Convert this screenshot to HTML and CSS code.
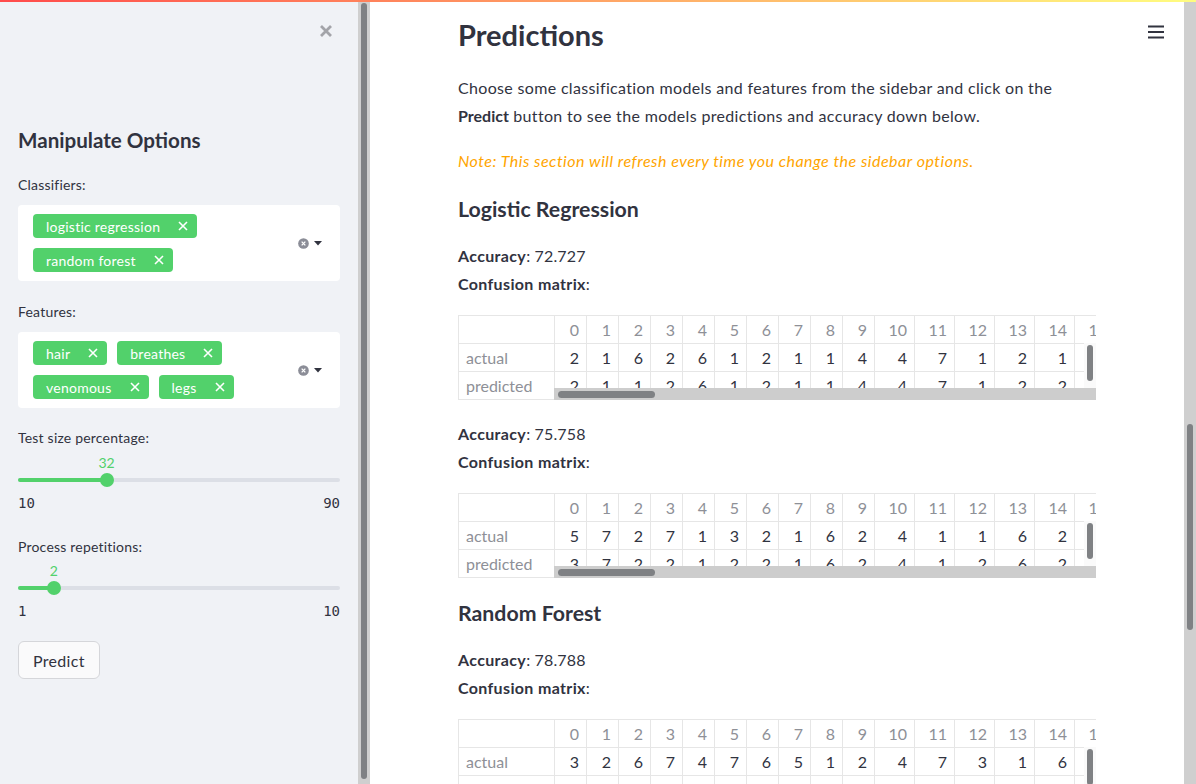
FILE: index.html
```html
<!DOCTYPE html>
<html lang="en">
<head>
<meta charset="utf-8">
<title>Predictions</title>
<link rel="stylesheet" href="styles.css">
</head>
<body>
<div class="decoration"></div>
<div class="app">
  <aside class="sidebar">
    <div class="sidebar-content">
      <div class="close-row">
        <svg class="close-icon" width="14" height="14" viewBox="0 0 14 14"><path d="M2 2L12 12M12 2L2 12" stroke="#a3a4a9" stroke-width="2.8" fill="none"/></svg>
      </div>
      <h2 class="side-title">Manipulate Options</h2>

      <div class="label first-label">Classifiers:</div>
      <div class="multiselect">
        <div class="tags">
          <span class="tag">logistic regression<svg class="tag-x" width="10" height="10" viewBox="0 0 10 10"><path d="M1 1L9 9M9 1L1 9" stroke="#fff" stroke-width="1.6"/></svg></span>
          <span class="tag">random forest<svg class="tag-x" width="10" height="10" viewBox="0 0 10 10"><path d="M1 1L9 9M9 1L1 9" stroke="#fff" stroke-width="1.6"/></svg></span>
        </div>
        <div class="ms-icons">
          <svg width="11" height="11" viewBox="0 0 12 12"><circle cx="6" cy="6" r="5.8" fill="#8b8d97"/><path d="M4 4L8 8M8 4L4 8" stroke="#fff" stroke-width="1.4"/></svg>
          <svg width="8" height="5" viewBox="0 0 8 5"><path d="M0 0H8L4 4.5Z" fill="#31333f"/></svg>
        </div>
      </div>

      <div class="label">Features:</div>
      <div class="multiselect">
        <div class="tags">
          <span class="tag">hair<svg class="tag-x" width="10" height="10" viewBox="0 0 10 10"><path d="M1 1L9 9M9 1L1 9" stroke="#fff" stroke-width="1.6"/></svg></span>
          <span class="tag">breathes<svg class="tag-x" width="10" height="10" viewBox="0 0 10 10"><path d="M1 1L9 9M9 1L1 9" stroke="#fff" stroke-width="1.6"/></svg></span>
          <span class="tag">venomous<svg class="tag-x" width="10" height="10" viewBox="0 0 10 10"><path d="M1 1L9 9M9 1L1 9" stroke="#fff" stroke-width="1.6"/></svg></span>
          <span class="tag">legs<svg class="tag-x" width="10" height="10" viewBox="0 0 10 10"><path d="M1 1L9 9M9 1L1 9" stroke="#fff" stroke-width="1.6"/></svg></span>
        </div>
        <div class="ms-icons">
          <svg width="11" height="11" viewBox="0 0 12 12"><circle cx="6" cy="6" r="5.8" fill="#8b8d97"/><path d="M4 4L8 8M8 4L4 8" stroke="#fff" stroke-width="1.4"/></svg>
          <svg width="8" height="5" viewBox="0 0 8 5"><path d="M0 0H8L4 4.5Z" fill="#31333f"/></svg>
        </div>
      </div>

      <div class="label slider-label">Test size percentage:</div>
      <div class="slider">
        <div class="slider-value-row"><span class="slider-value" style="left:27.5%">32</span></div>
        <div class="slider-track-area">
          <div class="slider-track"><div class="slider-fill" style="width:27.5%"></div></div>
          <div class="slider-thumb" style="left:27.5%"></div>
        </div>
        <div class="slider-minmax"><span>10</span><span>90</span></div>
      </div>

      <div class="label slider-label2">Process repetitions:</div>
      <div class="slider slider2">
        <div class="slider-value-row"><span class="slider-value" style="left:11.11%">2</span></div>
        <div class="slider-track-area">
          <div class="slider-track"><div class="slider-fill" style="width:11.11%"></div></div>
          <div class="slider-thumb" style="left:11.11%"></div>
        </div>
        <div class="slider-minmax"><span>1</span><span>10</span></div>
      </div>

      <button class="btn">Predict</button>
    </div>
    <div class="vscroll side-scroll"><div class="thumb"></div></div>
  </aside>

  <main class="main">
    <div class="main-area">
      <svg class="menu-icon" width="16" height="14" viewBox="0 0 16 14"><path d="M0 1.5H16M0 7H16M0 12.5H16" stroke="#31333f" stroke-width="2"/></svg>
      <div class="main-content">
        <h1 class="title">Predictions</h1>
        <p class="intro">Choose some classification models and features from the sidebar and click on the <strong>Predict</strong> button to see the models predictions and accuracy down below.</p>
        <p class="note">Note: This section will refresh every time you change the sidebar options.</p>

        <h3 class="model-title">Logistic Regression</h3>
        <div class="metric">
          <div><strong>Accuracy</strong>: 72.727</div>
          <div><strong>Confusion matrix</strong>:</div>
        </div>
        <div class="df">
          <table>
            <colgroup><col class="c-idx"><col class="c1"><col class="c1"><col class="c1"><col class="c1"><col class="c1"><col class="c1"><col class="c1"><col class="c1"><col class="c1"><col class="c1"><col class="c2"><col class="c2"><col class="c2"><col class="c2"><col class="c2"><col class="c2"></colgroup>
            <tr class="head"><th class="idx"></th><th>0</th><th>1</th><th>2</th><th>3</th><th>4</th><th>5</th><th>6</th><th>7</th><th>8</th><th>9</th><th>10</th><th>11</th><th>12</th><th>13</th><th>14</th><th>15</th></tr>
            <tr><th class="idx">actual</th><td>2</td><td>1</td><td>6</td><td>2</td><td>6</td><td>1</td><td>2</td><td>1</td><td>1</td><td>4</td><td>4</td><td>7</td><td>1</td><td>2</td><td>1</td><td>1</td></tr>
            <tr><th class="idx">predicted</th><td>2</td><td>1</td><td>1</td><td>2</td><td>6</td><td>1</td><td>2</td><td>1</td><td>1</td><td>4</td><td>4</td><td>7</td><td>1</td><td>2</td><td>2</td><td>1</td></tr>
          </table>
          <div class="df-vscroll"><div class="df-vthumb"></div></div>
          <div class="df-hscroll"><div class="df-hthumb"></div></div>
        </div>

        <div class="metric metric-gap">
          <div><strong>Accuracy</strong>: 75.758</div>
          <div><strong>Confusion matrix</strong>:</div>
        </div>
        <div class="df">
          <table>
            <colgroup><col class="c-idx"><col class="c1"><col class="c1"><col class="c1"><col class="c1"><col class="c1"><col class="c1"><col class="c1"><col class="c1"><col class="c1"><col class="c1"><col class="c2"><col class="c2"><col class="c2"><col class="c2"><col class="c2"><col class="c2"></colgroup>
            <tr class="head"><th class="idx"></th><th>0</th><th>1</th><th>2</th><th>3</th><th>4</th><th>5</th><th>6</th><th>7</th><th>8</th><th>9</th><th>10</th><th>11</th><th>12</th><th>13</th><th>14</th><th>15</th></tr>
            <tr><th class="idx">actual</th><td>5</td><td>7</td><td>2</td><td>7</td><td>1</td><td>3</td><td>2</td><td>1</td><td>6</td><td>2</td><td>4</td><td>1</td><td>1</td><td>6</td><td>2</td><td>1</td></tr>
            <tr><th class="idx">predicted</th><td>3</td><td>7</td><td>2</td><td>2</td><td>1</td><td>2</td><td>2</td><td>1</td><td>6</td><td>2</td><td>4</td><td>1</td><td>2</td><td>6</td><td>2</td><td>1</td></tr>
          </table>
          <div class="df-vscroll"><div class="df-vthumb"></div></div>
          <div class="df-hscroll"><div class="df-hthumb"></div></div>
        </div>

        <h3 class="model-title model-title2">Random Forest</h3>
        <div class="metric">
          <div><strong>Accuracy</strong>: 78.788</div>
          <div><strong>Confusion matrix</strong>:</div>
        </div>
        <div class="df">
          <table>
            <colgroup><col class="c-idx"><col class="c1"><col class="c1"><col class="c1"><col class="c1"><col class="c1"><col class="c1"><col class="c1"><col class="c1"><col class="c1"><col class="c1"><col class="c2"><col class="c2"><col class="c2"><col class="c2"><col class="c2"><col class="c2"></colgroup>
            <tr class="head"><th class="idx"></th><th>0</th><th>1</th><th>2</th><th>3</th><th>4</th><th>5</th><th>6</th><th>7</th><th>8</th><th>9</th><th>10</th><th>11</th><th>12</th><th>13</th><th>14</th><th>15</th></tr>
            <tr><th class="idx">actual</th><td>3</td><td>2</td><td>6</td><td>7</td><td>4</td><td>7</td><td>6</td><td>5</td><td>1</td><td>2</td><td>4</td><td>7</td><td>3</td><td>1</td><td>6</td><td>1</td></tr>
            <tr><th class="idx">predicted</th><td>3</td><td>2</td><td>6</td><td>7</td><td>4</td><td>7</td><td>6</td><td>5</td><td>1</td><td>2</td><td>4</td><td>7</td><td>3</td><td>1</td><td>6</td><td>1</td></tr>
          </table>
          <div class="df-vscroll"><div class="df-vthumb"></div></div>
          <div class="df-hscroll"><div class="df-hthumb"></div></div>
        </div>
      </div>
    </div>
    <div class="vscroll main-scroll"><div class="thumb"></div></div>
  </main>
</div>
</body>
</html>
```

FILE: styles.css
```css
* { box-sizing: border-box; }
html, body { margin: 0; padding: 0; height: 100%; overflow: hidden; }
body {
  font-family: "Lato", "Noto Sans", sans-serif;
  color: #31333f;
  background: #ffffff;
  font-size: 16px;
}
.decoration {
  position: fixed; top: 0; left: 0; right: 0; height: 2px;
  background: linear-gradient(90deg, #ff4b4b, #fffd80);
  z-index: 10;
}
.app { display: flex; height: 784px; }

/* Sidebar */
.sidebar { display: flex; width: 370px; flex: none; background: #f0f2f6; }
.sidebar-content { width: 358px; padding: 0 18px; }
.close-row { height: 62px; display: flex; align-items: center; justify-content: flex-end; padding-right: 7px; }
.side-title { margin: 64px 0 0; font-size: 20.6px; line-height: 28px; font-weight: 700; }
.label { font-size: 14px; line-height: 20px; margin-top: 21px; letter-spacing: 0.2px; }
.first-label { margin-top: 21px; }
.multiselect {
  margin-top: 10px; background: #ffffff; border-radius: 4px;
  padding: 9px 15px; display: flex; align-items: center;
}
.tags { flex: 1; display: flex; flex-wrap: wrap; gap: 10px; }
.tag {
  display: inline-flex; align-items: center; height: 24px;
  padding: 0 9px 0 13px; background: #52d16b; color: #ffffff;
  font-size: 14px; border-radius: 4px; letter-spacing: 0.25px;
}
.tag-x { margin-left: 18px; }
.ms-icons { display: flex; align-items: center; gap: 5px; margin-right: 3px; }
.slider-label { margin-top: 20px; }
.slider-label2 { margin-top: 24px; }
.slider { position: relative; }
.slider-value-row { position: relative; height: 20px; margin-top: 5px; }
.slider2 .slider-value-row { margin-top: 4px; }
.slider-value {
  position: absolute; top: 0; transform: translateX(-50%);
  font-size: 14px; line-height: 20px; color: #52d16b;
}
.slider-track-area { position: relative; height: 14px; display: flex; align-items: center; }
.slider-track { flex: 1; height: 4px; border-radius: 2px; background: #dcdfe6; }
.slider-fill { height: 4px; border-radius: 2px; background: #52d16b; }
.slider-thumb {
  position: absolute; top: 0; width: 14px; height: 14px; margin-left: -7px;
  border-radius: 50%; background: #52d16b;
}
.slider-minmax {
  display: flex; justify-content: space-between; margin-top: 6px;
  font-family: "DejaVu Sans Mono", "Liberation Mono", monospace;
  font-size: 14px; line-height: 20px; color: #31333f;
}
.btn {
  margin-top: 20px; height: 38px; padding: 0 14px;
  background: #fafafb; border: 1px solid #d5d6da; border-radius: 6px;
  font-family: inherit; font-size: 16px; color: #31333f; letter-spacing: 0.3px;
}

/* Scrollbars */
.vscroll { width: 12px; flex: none; background: #cfcfcf; display: flex; flex-direction: column; align-items: center; }
.vscroll .thumb { width: 6px; border-radius: 3px; background: #7f8184; }
.side-scroll .thumb { margin-top: 3px; height: 776px; }
.main-scroll .thumb { margin-top: 424px; height: 206px; }

/* Main */
.main { flex: 1; display: flex; }
.main-area { flex: 1; position: relative; }
.menu-icon { position: absolute; top: 25px; right: 20px; }
.main-content { width: 638px; margin: 0 auto; }
.title { margin: 15px 0 0; font-size: 29px; line-height: 40px; font-weight: 700; }
.intro { margin: 19px 0 0; line-height: 28px; letter-spacing: 0.33px; }
.intro strong { font-weight: 700; letter-spacing: 0; }
.note { margin: 17px 0 0; line-height: 28px; font-style: italic; color: #ffa500; letter-spacing: 0.5px; }
.model-title { margin: 20px 0 0; font-size: 21.3px; line-height: 28px; font-weight: 700; }
.model-title2 { margin-top: 21px; }
.metric { margin-top: 19px; line-height: 28px; letter-spacing: 0.15px; }
.metric strong { font-weight: 700; letter-spacing: 0.35px; }
.metric-gap { margin-top: 20px; }

/* Dataframe */
.df { position: relative; margin-top: 17px; width: 638px; height: 85px; overflow: hidden; }
.df table { border-collapse: collapse; table-layout: fixed; width: 656px; }
.c-idx { width: 96px; }
.c1 { width: 32px; }
.c2 { width: 40px; }
.df th, .df td {
  height: 28px; padding: 0 7px; border: 1px solid #e6e6e6;
  text-align: right; font-size: 16px; line-height: 26px; white-space: nowrap;
  overflow: hidden; font-weight: 400;
}
.df td { color: #31333f; }
.df th { color: #8e9097; }
.df th.idx { text-align: left; }
.df-hscroll {
  position: absolute; left: 96px; right: 0; bottom: 0; height: 12px;
  background: #cdcdcd;
}
.df-hthumb { position: absolute; left: 4px; top: 3px; width: 97px; height: 7px; border-radius: 4px; background: #7f8184; }
.df-vscroll { position: absolute; right: 0; top: 28px; bottom: 12px; width: 12px; background: #fafafa; }
.df-vthumb { position: absolute; left: 3px; top: 2px; width: 6px; height: 36px; border-radius: 3px; background: #7f8184; }
```
